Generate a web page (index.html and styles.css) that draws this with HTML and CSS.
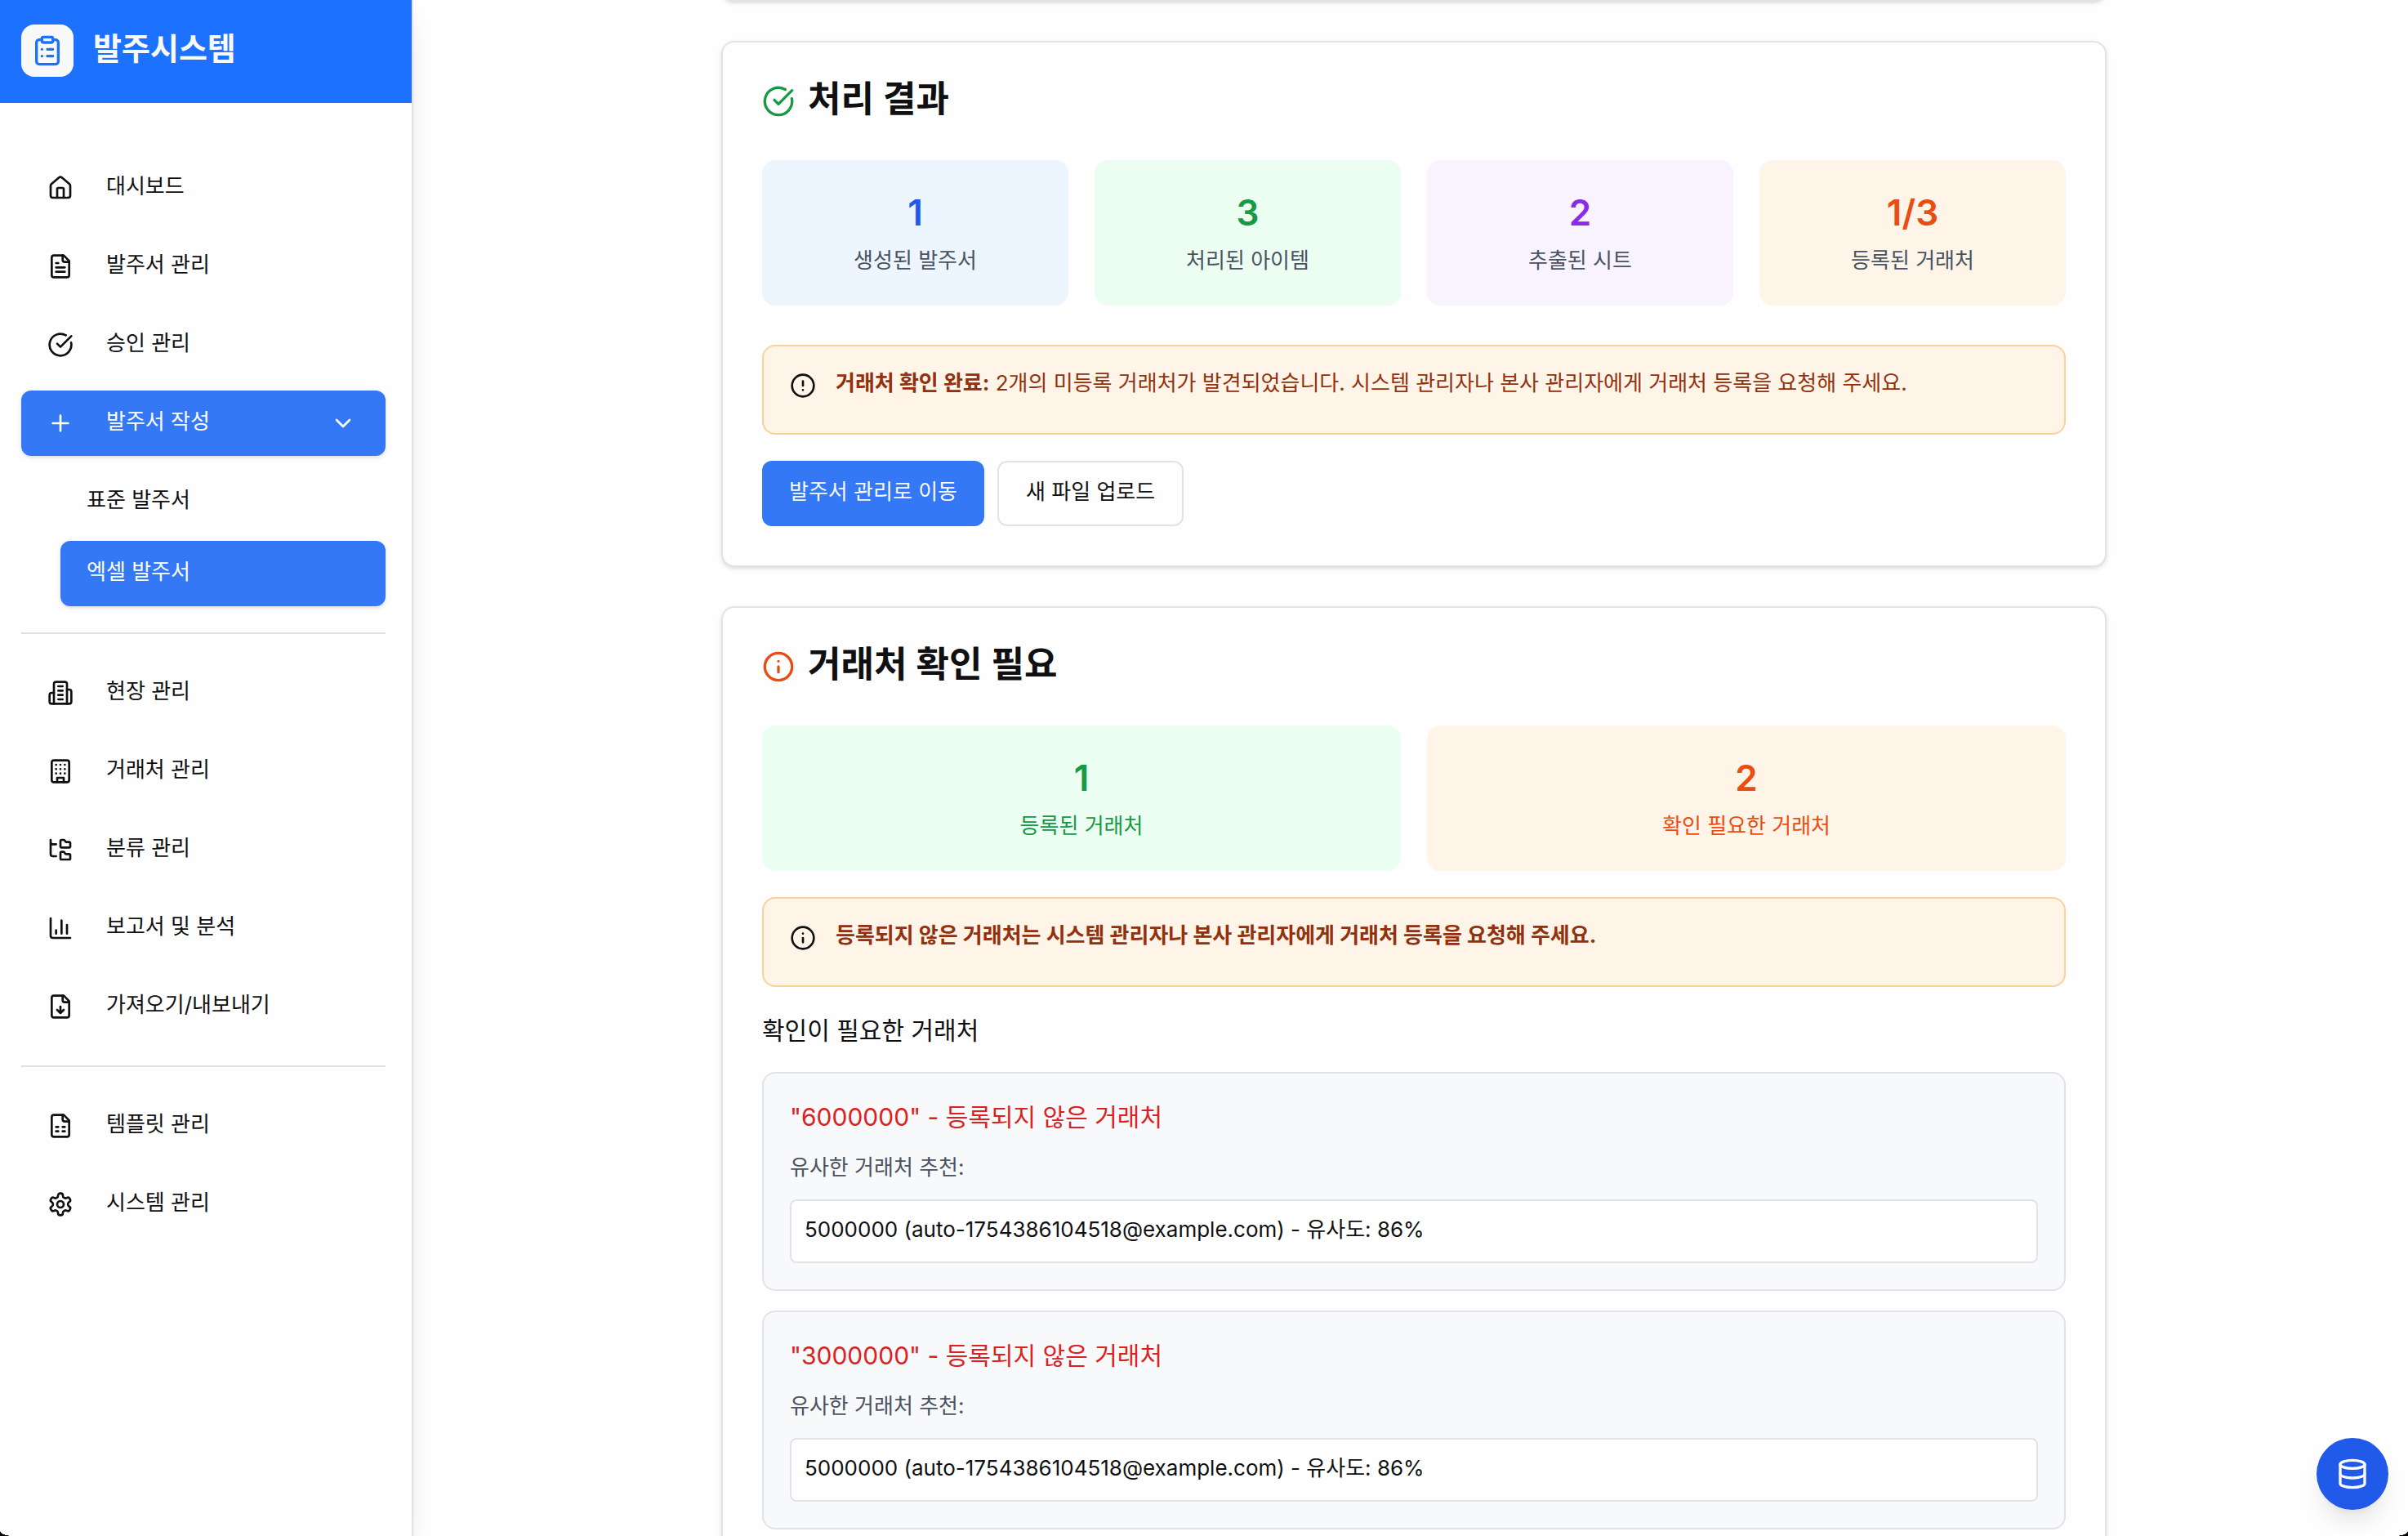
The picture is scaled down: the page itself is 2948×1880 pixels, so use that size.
FILE: index.html
```html
<!DOCTYPE html>
<html lang="ko">
<head>
<meta charset="utf-8">
<meta name="viewport" content="width=device-width, initial-scale=1">
<title>발주시스템</title>
<link rel="stylesheet" href="styles.css">
</head>
<body>
<div class="shell">
  <aside class="sidebar">
    <header class="brand">
      <span class="brand-mark"><svg class="icon icon-lg" viewBox="0 0 24 24"><rect x="8" y="2" width="8" height="4" rx="1"/><path d="M16 4h2a2 2 0 0 1 2 2v14a2 2 0 0 1-2 2H6a2 2 0 0 1-2-2V6a2 2 0 0 1 2-2h2"/><path d="M12 11h4M12 16h4M8 11h.01M8 16h.01"/></svg></span>
      <h1 class="brand-name">발주시스템</h1>
    </header>
    <nav class="nav">
      <div class="nav-group">
        <a class="nav-item" href="#"><svg class="icon" viewBox="0 0 24 24"><path d="M15 21v-8a1 1 0 0 0-1-1h-4a1 1 0 0 0-1 1v8"/><path d="M3 10a2 2 0 0 1 .709-1.528l7-5.999a2 2 0 0 1 2.582 0l7 5.999A2 2 0 0 1 21 10v9a2 2 0 0 1-2 2H5a2 2 0 0 1-2-2z"/></svg><span class="label">대시보드</span></a>
        <a class="nav-item" href="#"><svg class="icon" viewBox="0 0 24 24"><path d="M15 2H6a2 2 0 0 0-2 2v16a2 2 0 0 0 2 2h12a2 2 0 0 0 2-2V7Z"/><path d="M14 2v4a2 2 0 0 0 2 2h4M10 9H8M16 13H8M16 17H8"/></svg><span class="label">발주서 관리</span></a>
        <a class="nav-item" href="#"><svg class="icon" viewBox="0 0 24 24"><path d="M21.801 10A10 10 0 1 1 17 3.335"/><path d="m9 11 3 3L22 4"/></svg><span class="label">승인 관리</span></a>
        <button class="nav-item active" type="button"><svg class="icon" viewBox="0 0 24 24"><path d="M5 12h14M12 5v14"/></svg><span class="label">발주서 작성</span><svg class="icon" viewBox="0 0 24 24"><path d="m6 9 6 6 6-6"/></svg></button>
        <div class="nav-sub">
          <a class="nav-item" href="#"><span class="label">표준 발주서</span></a>
          <a class="nav-item active" href="#"><span class="label">엑셀 발주서</span></a>
        </div>
      </div>
      <div class="nav-group">
        <a class="nav-item" href="#"><svg class="icon" viewBox="0 0 24 24"><path d="M6 22V4a2 2 0 0 1 2-2h8a2 2 0 0 1 2 2v18Z"/><path d="M6 12H4a2 2 0 0 0-2 2v6a2 2 0 0 0 2 2h2M18 9h2a2 2 0 0 1 2 2v9a2 2 0 0 1-2 2h-2M10 6h4M10 10h4M10 14h4M10 18h4"/></svg><span class="label">현장 관리</span></a>
        <a class="nav-item" href="#"><svg class="icon" viewBox="0 0 24 24"><rect x="4" y="2" width="16" height="20" rx="2"/><path d="M9 22v-4h6v4M8 6h.01M16 6h.01M12 6h.01M12 10h.01M12 14h.01M16 10h.01M16 14h.01M8 10h.01M8 14h.01"/></svg><span class="label">거래처 관리</span></a>
        <a class="nav-item" href="#"><svg class="icon" viewBox="0 0 24 24"><path d="M20 10a1 1 0 0 0 1-1V6a1 1 0 0 0-1-1h-2.500a1 1 0 0 1-.8-.4l-.9-1.200A1 1 0 0 0 15 3h-2a1 1 0 0 0-1 1v5a1 1 0 0 0 1 1Z"/><path d="M20 21a1 1 0 0 0 1-1v-3a1 1 0 0 0-1-1h-2.900a1 1 0 0 1-.88-.55l-.42-.85a1 1 0 0 0-.92-.6H13a1 1 0 0 0-1 1v5a1 1 0 0 0 1 1Z"/><path d="M3 5a2 2 0 0 0 2 2h3M3 3v13a2 2 0 0 0 2 2h3"/></svg><span class="label">분류 관리</span></a>
        <a class="nav-item" href="#"><svg class="icon" viewBox="0 0 24 24"><path d="M3 3v16a2 2 0 0 0 2 2h16M18 17V9M13 17V5M8 17v-3"/></svg><span class="label">보고서 및 분석</span></a>
        <a class="nav-item" href="#"><svg class="icon" viewBox="0 0 24 24"><path d="M15 2H6a2 2 0 0 0-2 2v16a2 2 0 0 0 2 2h12a2 2 0 0 0 2-2V7Z"/><path d="M14 2v4a2 2 0 0 0 2 2h4M12 18v-6M9 15l3 3 3-3"/></svg><span class="label">가져오기/내보내기</span></a>
      </div>
      <div class="nav-group">
        <a class="nav-item" href="#"><svg class="icon" viewBox="0 0 24 24"><path d="M15 2H6a2 2 0 0 0-2 2v16a2 2 0 0 0 2 2h12a2 2 0 0 0 2-2V7Z"/><path d="M14 2v4a2 2 0 0 0 2 2h4M8 13h2M14 13h2M8 17h2M14 17h2"/></svg><span class="label">템플릿 관리</span></a>
        <a class="nav-item" href="#"><svg class="icon" viewBox="0 0 24 24"><path d="M12.220 2h-.44a2 2 0 0 0-2 2v.18a2 2 0 0 1-1 1.730l-.43.25a2 2 0 0 1-2 0l-.15-.08a2 2 0 0 0-2.730.73l-.22.38a2 2 0 0 0 .73 2.730l.15.1a2 2 0 0 1 1 1.720v.51a2 2 0 0 1-1 1.740l-.15.09a2 2 0 0 0-.73 2.730l.22.38a2 2 0 0 0 2.730.73l.15-.08a2 2 0 0 1 2 0l.43.25a2 2 0 0 1 1 1.730V20a2 2 0 0 0 2 2h.44a2 2 0 0 0 2-2v-.18a2 2 0 0 1 1-1.730l.43-.25a2 2 0 0 1 2 0l.15.08a2 2 0 0 0 2.730-.73l.22-.39a2 2 0 0 0-.73-2.730l-.15-.08a2 2 0 0 1-1-1.740v-.5a2 2 0 0 1 1-1.740l.15-.09a2 2 0 0 0 .73-2.730l-.22-.38a2 2 0 0 0-2.730-.73l-.15.08a2 2 0 0 1-2 0l-.43-.25a2 2 0 0 1-1-1.730V4a2 2 0 0 0-2-2z"/><circle cx="12" cy="12" r="3"/></svg><span class="label">시스템 관리</span></a>
      </div>
    </nav>
  </aside>

  <main class="main">
    <div class="stack">
      <section class="card card-scrolled"></section>

      <section class="card">
        <h2 class="card-title"><svg class="icon icon-lg green" viewBox="0 0 24 24"><path d="M21.801 10A10 10 0 1 1 17 3.335"/><path d="m9 11 3 3L22 4"/></svg><span class="label">처리 결과</span></h2>
        <div class="stats four">
          <div class="stat stat-blue"><div class="stat-value">1</div><div class="stat-label">생성된 발주서</div></div>
          <div class="stat stat-green"><div class="stat-value">3</div><div class="stat-label">처리된 아이템</div></div>
          <div class="stat stat-purple"><div class="stat-value">2</div><div class="stat-label">추출된 시트</div></div>
          <div class="stat stat-orange"><div class="stat-value">1/3</div><div class="stat-label">등록된 거래처</div></div>
        </div>
        <div class="alert alert-spaced" role="alert">
          <svg class="icon" viewBox="0 0 24 24"><circle cx="12" cy="12" r="10"/><path d="M12 8v4M12 16h.01"/></svg>
          <p class="alert-text"><strong>거래처 확인 완료:</strong> 2개의 미등록 거래처가 발견되었습니다. 시스템 관리자나 본사 관리자에게 거래처 등록을 요청해 주세요.</p>
        </div>
        <div class="actions">
          <button class="btn btn-primary" type="button">발주서 관리로 이동</button>
          <button class="btn btn-outline" type="button">새 파일 업로드</button>
        </div>
      </section>

      <section class="card">
        <h2 class="card-title"><svg class="icon icon-lg orange" viewBox="0 0 24 24"><circle cx="12" cy="12" r="10"/><path d="M12 16v-4M12 8h.01"/></svg><span class="label">거래처 확인 필요</span></h2>
        <div class="stats two">
          <div class="stat stat-green tinted"><div class="stat-value">1</div><div class="stat-label">등록된 거래처</div></div>
          <div class="stat stat-orange tinted"><div class="stat-value">2</div><div class="stat-label">확인 필요한 거래처</div></div>
        </div>
        <div class="alert" role="alert">
          <svg class="icon" viewBox="0 0 24 24"><circle cx="12" cy="12" r="10"/><path d="M12 16v-4M12 8h.01"/></svg>
          <p class="alert-text"><strong>등록되지 않은 거래처는 시스템 관리자나 본사 관리자에게 거래처 등록을 요청해 주세요.</strong></p>
        </div>
        <h3 class="section-title">확인이 필요한 거래처</h3>
        <div class="vendors">
          <article class="vendor">
            <h4 class="vendor-name">"6000000" - 등록되지 않은 거래처</h4>
            <p class="vendor-hint">유사한 거래처 추천:</p>
            <div class="suggestion">5000000 (auto-1754386104518@example.com) - 유사도: 86%</div>
          </article>
          <article class="vendor">
            <h4 class="vendor-name">"3000000" - 등록되지 않은 거래처</h4>
            <p class="vendor-hint">유사한 거래처 추천:</p>
            <div class="suggestion">5000000 (auto-1754386104518@example.com) - 유사도: 86%</div>
          </article>
        </div>
      </section>
    </div>
  </main>
</div>
<button class="fab" type="button" aria-label="데이터베이스"><svg class="icon icon-lg" viewBox="0 0 24 24"><ellipse cx="12" cy="5" rx="9" ry="3"/><path d="M3 5v14a9 3 0 0 0 18 0V5"/><path d="M3 12a9 3 0 0 0 18 0"/></svg></button>
<span class="corner corner-left"></span>
<span class="corner corner-right"></span>
</body>
</html>
```

FILE: styles.css
```css
*, *::before, *::after { box-sizing: border-box; }

:root {
  --primary: #3478f6;
  --text: #101012;
  --muted: #4a5361;
  --border: #e2e3e9;
}

body, h1, h2, h3, h4, p { margin: 0; }

body {
  background: #fefefe;
  color: var(--text);
  font-family: Inter, "Noto Sans CJK KR", sans-serif;
  font-size: 26px;
  line-height: 42px;
}

button { font: inherit; border: 0; cursor: pointer; }
a { color: inherit; text-decoration: none; }

.icon {
  width: 32px;
  height: 32px;
  flex: none;
  fill: none;
  stroke: currentColor;
  stroke-width: 2;
  stroke-linecap: round;
  stroke-linejoin: round;
}
.icon-lg { width: 40px; height: 40px; }
.green { color: #169a45; }
.orange { color: #ea4d12; }

.shell { display: flex; height: 100vh; overflow: hidden; }

/* Sidebar */
.sidebar {
  width: 506px;
  flex: none;
  background: #fefefe;
  border-right: 2px solid #e1e1e1;
  box-shadow: 0 20px 30px -6px rgba(0, 0, 0, .1), 0 8px 12px -8px rgba(0, 0, 0, .1);
}
.brand {
  display: flex;
  align-items: center;
  gap: 24px;
  padding: 30px 26px 32px;
  background: #1d71ff;
  color: #f9f9fa;
}
.brand-mark {
  display: grid;
  place-items: center;
  width: 64px;
  height: 64px;
  border-radius: 16px;
  background: #f9f9fa;
  color: #1d71ff;
}
.brand-name { padding-bottom: 6px; font-size: 38px; font-weight: 700; }
.nav { padding: 64px 32px 32px 26px; }
.nav-group { display: flex; flex-direction: column; gap: 16px; }
.nav-group + .nav-group {
  margin-top: 32px;
  padding-top: 32px;
  border-top: 2px solid #e1e1e1;
}
.nav-item {
  display: flex;
  align-items: center;
  gap: 40px;
  height: 80px;
  padding: 0 36px 0 32px;
  border-radius: 12px;
  background: none;
  text-align: left;
}
.nav-item .label { flex: 1; padding-bottom: 4px; }
.nav-item.active {
  background: var(--primary);
  color: #fff;
  box-shadow: 0 2px 6px rgba(0, 0, 0, .1), 0 2px 4px -2px rgba(0, 0, 0, .1);
}
.nav-sub {
  display: flex;
  flex-direction: column;
  gap: 8px;
  padding-left: 48px;
}

/* Content */
.main { flex: 1; min-width: 0; overflow: hidden; padding-left: 8px; }
.stack {
  display: flex;
  flex-direction: column;
  gap: 48px;
  max-width: 1792px;
  margin: 0 auto;
  padding: 0 48px 48px;
}
.card {
  padding: 48px;
  border: 2px solid var(--border);
  border-radius: 16px;
  background: #fefefe;
  box-shadow: 0 2px 6px rgba(0, 0, 0, .1), 0 2px 4px -2px rgba(0, 0, 0, .1);
}
/* Upload card, scrolled out of view down to its bottom edge */
.card-scrolled { height: 100px; margin-top: -98px; }

.card-title {
  display: flex;
  align-items: center;
  gap: 16px;
  height: 48px;
  margin-bottom: 48px;
  font-size: 44px;
  font-weight: 600;
  line-height: 48px;
}
.card-title .label { padding-bottom: 6px; }

.stats { display: grid; gap: 32px; }
.four { grid-template-columns: repeat(4, 1fr); }
.two { grid-template-columns: repeat(2, 1fr); }
.stat { padding: 32px; border-radius: 16px; text-align: center; }
.stat-value { font-size: 44px; font-weight: 600; line-height: 64px; }
.stat-label { margin-top: 4px; line-height: 46px; color: var(--muted); }
.stat-blue { background: #edf5ff; color: #2159e8; }
.stat-green { background: #ecfdf2; color: #169a45; }
.stat-purple { background: #f8f3ff; color: #8a2be8; }
.stat-orange { background: #fef5e8; color: #ea4d12; }
.tinted .stat-label { color: inherit; }

.alert {
  display: flex;
  gap: 24px;
  margin-top: 32px;
  padding: 24px 32px 40px;
  border: 2px solid #fcd09c;
  border-radius: 16px;
  background: #fef5e8;
}
.alert-spaced { margin-top: 48px; }
.alert .icon { margin-top: 8px; }
.alert-text { color: #93310f; }

.actions { display: flex; gap: 16px; margin-top: 32px; }
.btn {
  height: 80px;
  padding: 0 33px 4px;
  border-radius: 12px;
}
.btn-primary { background: var(--primary); color: #f9f9fa; }
.btn-outline { border: 2px solid var(--border); background: #fefefe; color: var(--text); }

.section-title { margin: 32px 0 30px; font-size: 30px; font-weight: 400; }
.vendors { display: grid; gap: 24px; }
.vendor {
  padding: 32px;
  border: 2px solid var(--border);
  border-radius: 16px;
  background: #f8f9fb;
}
.vendor-name { color: #da2222; font-size: 30px; font-weight: 400; }
.vendor-hint { margin: 20px 0 18px; color: var(--muted); }
.suggestion {
  padding: 14px 16px 18px;
  border: 2px solid var(--border);
  border-radius: 8px;
  background: #fff;
}

/* Floating action */
.fab {
  position: fixed;
  right: 24px;
  bottom: 32px;
  display: grid;
  place-items: center;
  width: 88px;
  height: 88px;
  border-radius: 50%;
  background: #2159e8;
  color: #fff;
  box-shadow: 0 20px 30px -6px rgba(0, 0, 0, .1), 0 8px 12px -8px rgba(0, 0, 0, .1);
}

/* Rounded window corners */
.corner { position: fixed; bottom: 0; width: 16px; height: 6px; }
.corner-left { left: 0; background: radial-gradient(ellipse farthest-side at 100% 0, transparent 96%, #000 100%); }
.corner-right { right: 0; background: radial-gradient(ellipse farthest-side at 0 0, transparent 96%, #000 100%); }
```
